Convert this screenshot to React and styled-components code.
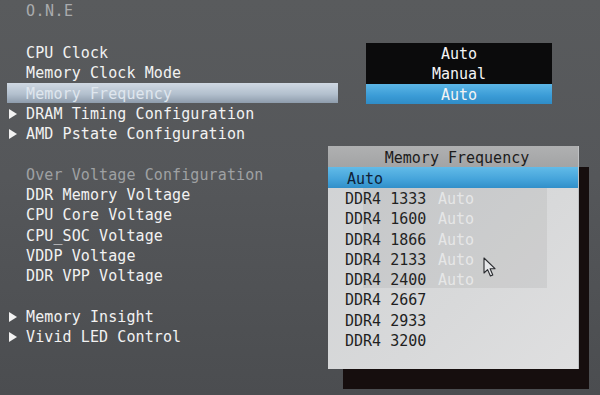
import React from "react";
import styled, { createGlobalStyle } from "styled-components";

const GlobalStyle = createGlobalStyle`
  html, body {
    margin: 0;
    padding: 0;
  }
  body {
    font-family: "DejaVu Sans Mono", "Liberation Mono", monospace;
    font-size: 15px;
  }
`;

const ROW = 20.3;
// BIOS glyphs sit a little lower in their row than DejaVu does
const LINE = ROW + 3;

const Screen = styled.div`
  position: relative;
  width: 600px;
  height: 395px;
  overflow: hidden;
  background: linear-gradient(180deg, #595b5d 0%, #55575a 45%, #4b4d50 100%);
`;

const Left = styled.div`
  display: flex;
  flex-direction: column;
  gap: 21px;
  padding-left: 7px;
  width: 331px;
`;

const Title = styled.div`
  height: 21px;
  line-height: 23px;
  padding-left: 19px;
  color: #a9abad;
  letter-spacing: 0.5px;
`;

const Menu = styled.ul`
  display: flex;
  flex-direction: column;
  list-style: none;
  margin: 0;
  padding: 0;
`;

const Item = styled.li`
  position: relative;
  height: ${ROW}px;
  line-height: ${LINE}px;
  padding-left: 19px;
  white-space: pre;
  letter-spacing: 0.1px;
  color: ${(p) => (p.dim ? "#9fa1a3" : p.active ? "#dfe6ee" : "#f2f2f2")};
  background: ${(p) =>
    p.active
      ? "linear-gradient(180deg, #cfd8e2 0%, #b3c0ce 55%, #8e9cac 100%)"
      : "transparent"};
`;

const Arrow = styled.span`
  position: absolute;
  left: 2px;
  top: 6px;
  width: 0;
  height: 0;
  border-top: 5px solid transparent;
  border-bottom: 5px solid transparent;
  border-left: 8px solid #f2f2f2;
`;

const Options = styled.div`
  position: absolute;
  left: 366px;
  top: 43px;
  width: 186px;
  display: flex;
  flex-direction: column;
  background: #0b0b0c;
`;

const Option = styled.div`
  height: ${ROW}px;
  line-height: ${LINE}px;
  text-align: center;
  color: #f4f4f4;
  background: ${(p) =>
    p.active ? "linear-gradient(180deg, #5cb6e6 0%, #3a9bd6 60%, #2f8cc6 100%)" : "transparent"};
`;

const Shadow = styled.div`
  position: absolute;
  left: 343px;
  top: 167px;
  width: 246px;
  height: 222px;
  background: #160e0e;
`;

const Dialog = styled.div`
  position: absolute;
  left: 328px;
  top: 146px;
  width: 250px;
  height: 223px;
  display: flex;
  flex-direction: column;
  background: linear-gradient(135deg, #d0d2d4 0%, #d8d9da 60%, #dfdfe0 100%);
  border-right: 1px solid #bfc1c3;
`;

const DialogHead = styled.div`
  height: 21px;
  line-height: 24px;
  text-align: center;
  padding-left: 8px;
  color: #1c1c1c;
  background: linear-gradient(180deg, #afb0b1 0%, #a3a4a5 100%);
`;

const Choice = styled.div`
  height: ${(p) => (p.active ? 21 : ROW)}px;
  line-height: ${(p) => (p.active ? 24 : LINE)}px;
  padding-left: ${(p) => (p.active ? 19 : 17)}px;
  white-space: pre;
  color: ${(p) => (p.active ? "#0f2236" : "#1f1f1f")};
  background: ${(p) =>
    p.active ? "linear-gradient(180deg, #62bbe8 0%, #44a3da 60%, #318fc9 100%)" : "transparent"};
`;

const Ghost = styled.div`
  position: absolute;
  left: 363px;
  top: 188px;
  width: 184px;
  height: 100px;
  display: flex;
  flex-direction: column;
  background: rgba(60, 60, 60, 0.08);
`;

const GhostText = styled.div`
  height: ${ROW}px;
  line-height: ${LINE}px;
  padding-left: 75px;
  color: rgba(255, 255, 255, 0.55);
`;

const Pointer = styled.svg`
  position: absolute;
  left: 483px;
  top: 257px;
`;

const menu = [
  { label: "CPU Clock" },
  { label: "Memory Clock Mode" },
  { label: "Memory Frequency", active: true },
  { label: "DRAM Timing Configuration", sub: true },
  { label: "AMD Pstate Configuration", sub: true },
  { label: "" },
  { label: "Over Voltage Configuration", dim: true },
  { label: "DDR Memory Voltage" },
  { label: "CPU Core Voltage" },
  { label: "CPU_SOC Voltage" },
  { label: "VDDP Voltage" },
  { label: "DDR VPP Voltage" },
  { label: "" },
  { label: "Memory Insight", sub: true },
  { label: "Vivid LED Control", sub: true },
];

const speeds = ["1333", "1600", "1866", "2133", "2400", "2667", "2933", "3200"];

export default function App() {
  return (
    <Screen>
      <GlobalStyle />
      <Left>
        <Title>O.N.E</Title>
        <Menu>
          {menu.map((m, i) => (
            <Item key={i} active={m.active} dim={m.dim}>
              {m.sub && <Arrow />}
              {m.label}
            </Item>
          ))}
        </Menu>
      </Left>

      <Options>
        <Option>Auto</Option>
        <Option>Manual</Option>
        <Option active>Auto</Option>
      </Options>

      <Shadow />
      <Dialog>
        <DialogHead>Memory Frequency</DialogHead>
        <Choice active>Auto</Choice>
        {speeds.map((s) => (
          <Choice key={s}>{"DDR4 " + s}</Choice>
        ))}
      </Dialog>

      <Ghost>
        {[0, 1, 2, 3, 4].map((i) => (
          <GhostText key={i}>Auto</GhostText>
        ))}
      </Ghost>

      <Pointer width="14" height="21" viewBox="0 0 14 21">
        <path
          d="M1 1 L1 16 L4.6 12.6 L7.4 19 L9.8 18 L7.1 11.7 L12 11.7 Z"
          fill="#e6e7e9"
          stroke="#2a2c30"
          strokeWidth="1.1"
          strokeLinejoin="round"
        />
      </Pointer>
    </Screen>
  );
}
